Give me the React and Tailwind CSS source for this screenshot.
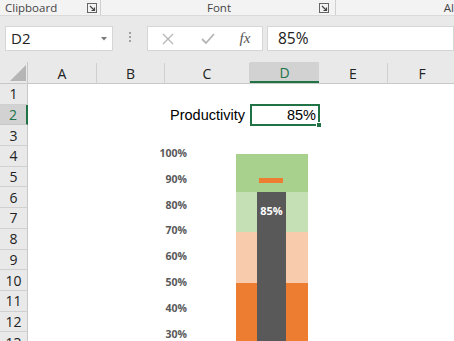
import React from "react";

const cols = [
  { l: "A", w: 69 },
  { l: "B", w: 68 },
  { l: "C", w: 85 },
  { l: "D", w: 69, sel: true },
  { l: "E", w: 69 },
  { l: "F", w: 69 },
];

const rows = Array.from({ length: 13 }, (_, i) => i + 1);

function Launcher() {
  return (
    <svg width="10" height="10" viewBox="0 0 10 10" className="block">
      <rect x="0.5" y="0.5" width="9" height="9" fill="none" stroke="#666" strokeWidth="1" />
      <path d="M3 3 L7.5 7.5 M7.5 4.5 V7.5 H4.5" fill="none" stroke="#444" strokeWidth="1.2" />
    </svg>
  );
}

export default function App() {
  const labels = ["100%", "90%", "80%", "70%", "60%", "50%", "40%", "30%", "20%"];
  return (
    <div className="w-[454px] h-[341px] overflow-hidden bg-white relative font-['Liberation_Sans',Arial,sans-serif]">
      {/* ribbon group labels */}
      <div className="h-[16px] bg-[#f3f3f3] border-b border-[#dadada] flex items-center text-[11.5px] text-[#444] font-['Open_Sans',sans-serif] leading-none">
        <div className="w-[101px] flex items-center pl-[5px] pr-[3px] justify-between border-r border-[#d0d0d0] h-full">
          <span>Clipboard</span>
          <Launcher />
        </div>
        <div className="w-[235px] flex items-center pr-[6px] border-r border-[#d0d0d0] h-full">
          <span className="flex-1 text-center pl-[18px]">Font</span>
          <Launcher />
        </div>
        <div className="flex-1 text-right whitespace-nowrap overflow-hidden">
          <span>Al</span>
        </div>
      </div>
      {/* formula bar */}
      <div className="h-[46px] bg-[#e9e9e9] pt-[10px] pl-[5px] flex items-start">
        <div className="w-[108px] h-[25px] bg-white border border-[#d6d6d6] flex items-center justify-between pl-[5px] pr-[5px] text-[15px] text-[#222] font-['Open_Sans',sans-serif]">
          <span>D2</span>
          <svg width="6" height="4" viewBox="0 0 6 4"><path d="M0 0 H6 L3 3.5 Z" fill="#777" /></svg>
        </div>
        <div className="w-[34px] flex flex-col items-center gap-[2px] pt-[6px]">
          <span className="w-[2px] h-[2px] bg-[#a0a0a0]" />
          <span className="w-[2px] h-[2px] bg-[#a0a0a0]" />
          <span className="w-[2px] h-[2px] bg-[#a0a0a0]" />
        </div>
        <div className="w-[116px] h-[25px] bg-white border border-[#d6d6d6] flex items-center">
          <div className="w-[40px] flex justify-center">
            <svg width="12" height="12" viewBox="0 0 12 12"><path d="M1 1 L11 11 M11 1 L1 11" stroke="#b5b5b5" strokeWidth="1.3" /></svg>
          </div>
          <div className="w-[40px] flex justify-center">
            <svg width="14" height="11" viewBox="0 0 14 11"><path d="M1 6 L5 10 L13 1" fill="none" stroke="#b5b5b5" strokeWidth="1.8" /></svg>
          </div>
          <div className="w-[34px] flex justify-center text-[15px] italic text-[#555] font-['Liberation_Serif',serif]">
            fx
          </div>
        </div>
        <div className="ml-[4px] flex-1 h-[25px] bg-white border border-[#d6d6d6] flex items-center pl-[10px] text-[15.5px] text-[#222] font-['Open_Sans',sans-serif]">
          85%
        </div>
      </div>
      {/* column header */}
      <div className="h-[22px] bg-[#e9e9e9] flex border-b border-[#c8c8c8] text-[14px] text-[#222] font-['Open_Sans',sans-serif]">
        <div className="w-[28px] h-full border-r border-[#c8c8c8] relative shrink-0">
          <svg width="16" height="16" viewBox="0 0 16 16" className="absolute left-[10px] top-[3px]"><path d="M16 0 V16 H0 Z" fill="#b5b5b5" /></svg>
        </div>
        {cols.map((c) => (
          <div
            key={c.l}
            style={{ width: c.w }}
            className={
              c.sel
                ? "shrink-0 h-full flex items-center justify-center bg-[#d2d2d2] border-b-2 border-[#217346] text-[#217346] pt-[2px]"
                : "shrink-0 h-full flex items-center justify-center border-r border-[#d0d0d0] mt-[1px]"
            }
          >
            {c.l}
          </div>
        ))}
      </div>
      {/* sheet */}
      <div className="relative">
        {rows.map((r) => (
          <div key={r} className="h-[20.7px] flex">
            <div
              className={
                r === 2
                  ? "w-[28px] shrink-0 bg-[#d2d2d2] border-r-2 border-[#217346] border-b border-b-[#c8c8c8] flex items-center justify-center text-[14px] text-[#217346] font-['Open_Sans',sans-serif]"
                  : "w-[28px] shrink-0 bg-[#e9e9e9] border-r border-[#c8c8c8] border-b border-b-[#d0d0d0] flex items-center justify-center text-[14px] text-[#222] font-['Open_Sans',sans-serif]"
              }
            >
              {r}
            </div>
            {r === 2 && (
              <div className="flex text-[14.5px] text-black">
                <div className="w-[137px]" />
                <div className="w-[85px] text-right pr-[5px] leading-[20.7px]">Productivity</div>
                <div className="w-[70px] h-[22px] -mt-[1px] border-2 border-[#217346] text-right pr-[2px] leading-[18px] relative">
                  85%
                  <span className="absolute -right-[4px] -bottom-[4px] w-[6px] h-[6px] bg-[#217346] border border-white" />
                </div>
              </div>
            )}
          </div>
        ))}

        {/* chart overlay */}
        <div className="absolute left-0 top-0 w-[454px] h-[260px] pointer-events-none">
          <div className="absolute left-[140px] top-[57px] w-[47px] flex flex-col text-[10.5px] font-bold text-[#595959] font-['Open_Sans',sans-serif]">
            {labels.map((t) => (
              <div key={t} className="h-[25.8px] flex items-center justify-end">
                {t}
              </div>
            ))}
          </div>
          <div className="absolute left-[236px] top-[70px] w-[72px] h-[200px] flex flex-col">
            <div className="h-[38px] bg-[#a9d18e]" />
            <div className="h-[40px] bg-[#c5e0b4]" />
            <div className="h-[51px] bg-[#f8cbad]" />
            <div className="flex-1 bg-[#ed7d31]" />
          </div>
          <div className="absolute left-[259px] top-[94px] w-[24px] h-[5px] bg-[#ed7d31]" />
          <div className="absolute left-[257px] top-[108px] w-[29px] h-[160px] bg-[#595959] flex justify-center pt-[13px] text-[11px] font-bold text-white font-['Open_Sans',sans-serif] leading-none">
            85%
          </div>
        </div>
      </div>
    </div>
  );
}
